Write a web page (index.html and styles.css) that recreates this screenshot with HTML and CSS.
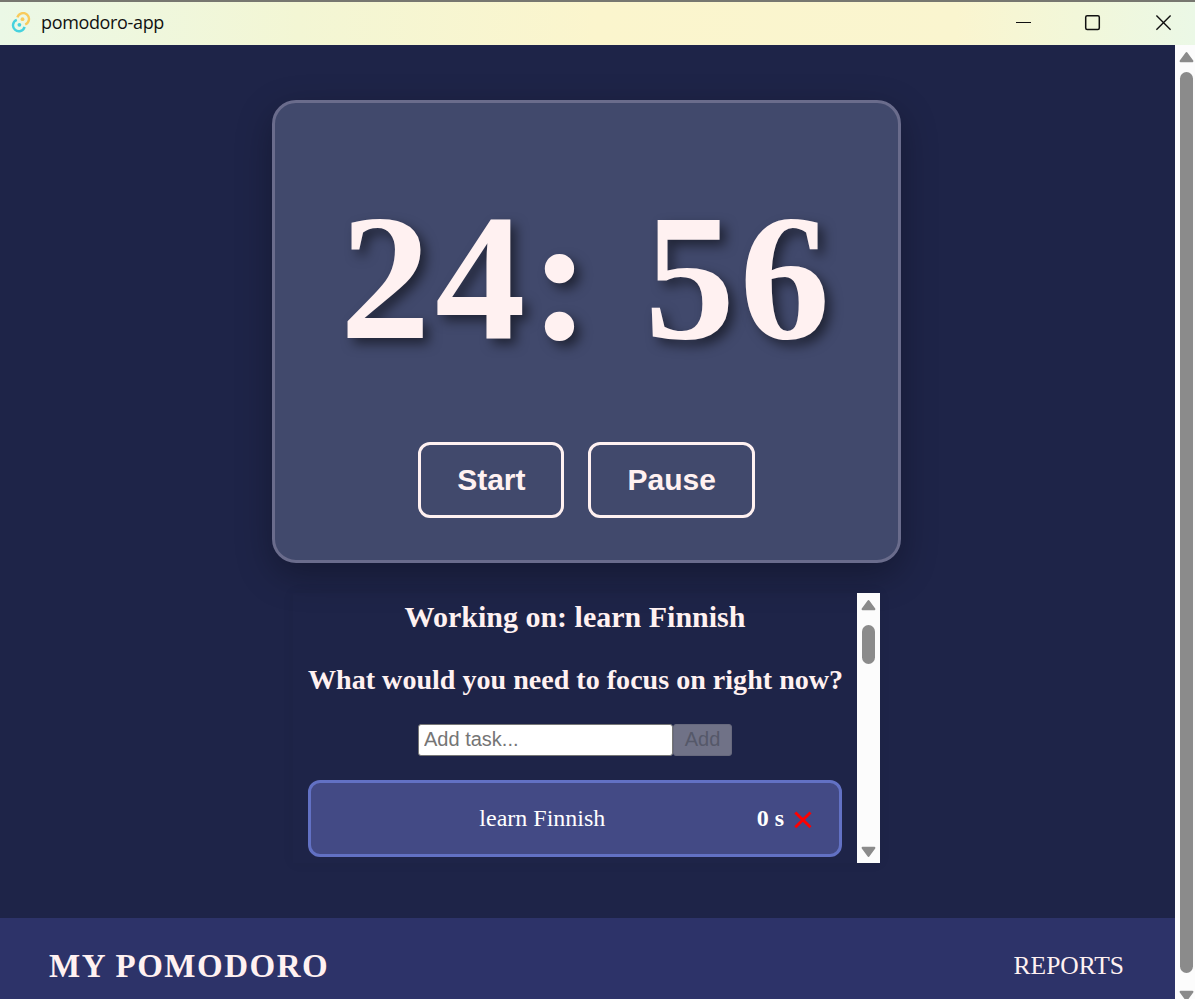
FILE: index.html
```html
<!DOCTYPE html>
<html lang="en">
<head>
<meta charset="utf-8">
<title>pomodoro-app</title>
<link rel="stylesheet" href="styles.css">
</head>
<body>
<header class="titlebar">
  <svg class="logo" width="20" height="21" viewBox="0 0 20 21" fill="none">
    <path d="M6.4 5.4A5.9 5.9 0 1 1 14.2 12.5" stroke="#f9cb5c" stroke-width="2.4"/>
    <path d="M13.6 14.9A5.9 5.9 0 1 1 5.8 7.8" stroke="#46d2de" stroke-width="2.4"/>
    <circle cx="11.5" cy="7.2" r="1.9" fill="#f9cb5c"/>
    <circle cx="8.4" cy="12.8" r="1.9" fill="#46d2de"/>
  </svg>
  <span class="window-title">pomodoro-app</span>
  <svg class="window-controls" width="156" height="16" viewBox="0 0 156 16" fill="none" stroke="#111">
    <path d="M0 7.5H15" stroke-width="1"/>
    <rect x="69.7" y="0.8" width="13.6" height="13.6" rx="1.5" stroke-width="1.5"/>
    <path d="M140.4 0.5L154.6 14.7M154.6 0.5L140.4 14.7" stroke-width="1.4"/>
  </svg>
</header>
<div class="viewport">
  <div class="page">
    <main class="main">
      <section class="timer">
        <div class="clock">24: 56</div>
        <div class="actions">
          <button class="btn">Start</button>
          <button class="btn">Pause</button>
        </div>
      </section>
      <section class="panel">
        <div class="tasks">
          <h2 class="current">Working on: learn Finnish</h2>
          <h3 class="question">What would you need to focus on right now?</h3>
          <form class="add-form">
            <input class="add-input" placeholder="Add task...">
            <button class="add-btn" disabled>Add</button>
          </form>
          <div class="task">
            <span class="task-name">learn Finnish</span>
            <b class="task-time">0 s</b>
            <svg class="remove" width="18" height="18" viewBox="0 0 18 18"><path d="M1.3 1.5L16.5 16.3M16.5 1.5L1.3 16.3" stroke="#f00" stroke-width="2.9"/></svg>
          </div>
        </div>
        <div class="scrollbar inner-bar">
          <svg class="arrow" width="15" height="12" viewBox="0 0 15 12"><path d="M7.5 2L13.4 10.2H1.6Z" fill="#8b8b8b" stroke="#8b8b8b" stroke-width="2" stroke-linejoin="round"/></svg>
          <div class="thumb inner-thumb"></div>
          <svg class="arrow down" width="15" height="12" viewBox="0 0 15 12"><path d="M7.5 10L13.4 1.8H1.6Z" fill="#8b8b8b" stroke="#8b8b8b" stroke-width="2" stroke-linejoin="round"/></svg>
        </div>
      </section>
    </main>
    <footer class="footer">
      <span class="brand">MY POMODORO</span>
      <span class="reports">REPORTS</span>
    </footer>
  </div>
  <div class="scrollbar outer-bar">
    <svg class="arrow" width="15" height="12" viewBox="0 0 15 12"><path d="M7.5 2L13.4 10.2H1.6Z" fill="#8b8b8b" stroke="#8b8b8b" stroke-width="2" stroke-linejoin="round"/></svg>
    <div class="thumb outer-thumb"></div>
    <svg class="arrow cut" width="15" height="12" viewBox="0 0 15 12"><path d="M7.5 10L13.4 1.8H1.6Z" fill="#8b8b8b" stroke="#8b8b8b" stroke-width="2" stroke-linejoin="round"/></svg>
  </div>
</div>
</body>
</html>
```
FILE: styles.css
```css
* { box-sizing: border-box; }
html, body { height: 100%; }
body {
  margin: 0;
  overflow: hidden;
  display: flex;
  flex-direction: column;
  background: #1e2448;
  color: #fff1f1;
  font-family: "Liberation Serif", serif;
  font-size: 24px;
}
.titlebar {
  flex: none;
  height: 45px;
  display: flex;
  align-items: center;
  padding: 0 23px 0 11px;
  border-top: 2px solid #777770;
  background: linear-gradient(90deg, #ebf8e6 0%, #f3f6d4 25%, #fbf5cd 50%, #faf5cf 80%, #f2f7d9 90%, #ebf8e6 100%);
  color: #111;
}
.logo { margin-top: -2px; }
.window-title {
  margin-left: 10px;
  font: 400 18px/24px "Open Sans", sans-serif;
  letter-spacing: -0.35px;
  margin-top: -3px;
}
.window-controls { margin-left: auto; margin-top: -1px; }
.viewport { flex: 1; min-height: 0; display: flex; }
.page { flex: 1; display: flex; flex-direction: column; }
.main {
  flex: 1;
  min-height: 0;
  display: flex;
  flex-direction: column;
  align-items: center;
  padding: 55px 2px 0 0;
}
.timer {
  width: 629px;
  height: 463px;
  padding-top: 71px;
  border: 3px solid #6a6c8c;
  border-radius: 24px;
  background: #41496c;
  box-shadow: 0 12px 36px rgba(0, 0, 0, 0.3);
}
.clock {
  margin-left: 65px;
  height: 207px;
  font-size: 181px;
  line-height: 207px;
  font-weight: bold;
  letter-spacing: 4.5px;
  white-space: pre;
  text-shadow: 6px 6px 12px rgba(0, 0, 0, 0.5);
}
.actions { display: flex; justify-content: center; gap: 24px; margin-top: 61px; }
.btn {
  height: 76px;
  padding: 0 36px;
  border: 3px solid #fff1f1;
  border-radius: 12px;
  background: none;
  color: #fff1f1;
  font: bold 30px "Liberation Sans", sans-serif;
}
.panel {
  width: 587px;
  height: 270px;
  margin-top: 30px;
  display: flex;
  box-shadow: 0 0 12px rgba(0, 0, 0, 0.06);
}
.tasks { width: 564px; padding: 6px 15px 0; text-align: center; }
.current { margin: 0; font-size: 30px; line-height: 35px; }
.question { margin: 29px 0 0; font-size: 28.08px; line-height: 33px; white-space: nowrap; }
.add-form { display: flex; justify-content: center; margin: 28px 0 24px; }
.add-input {
  width: 255px;
  height: 32px;
  padding: 0 5px 2px;
  border: 1px solid #767676;
  border-radius: 3px;
  background: #fff;
  font: 20px "Liberation Sans", sans-serif;
}
.add-input::placeholder { color: #757575; }
.add-btn {
  width: 59px;
  height: 32px;
  padding: 0 0 2px;
  border: 1px solid #67697d;
  border-radius: 3px;
  background: #707287;
  color: #555869;
  font: 20px "Liberation Sans", sans-serif;
}
.task {
  height: 77px;
  display: flex;
  align-items: center;
  padding: 0 27px 0 17px;
  border: 3px solid #6271c4;
  border-radius: 12px;
  background: #434a85;
  color: #fff;
}
.task-name { flex: 1; }
.task-time { margin-right: 10px; }
.remove { margin-top: 2px; }
.scrollbar { display: flex; flex-direction: column; align-items: center; background: #fcfcfc; }
.thumb { background: #8b8b8b; border-radius: 7px; }
.inner-bar { width: 23px; padding: 6px 0 5px; }
.inner-thumb { width: 13px; height: 39px; margin-top: 14px; }
.down { margin-top: auto; }
.outer-bar { width: 20px; padding: 6px 0 0 3px; }
.outer-thumb { flex: none; width: 13px; height: 901px; margin-top: 9px; }
.arrow { flex: none; }
.cut { margin-top: 17px; }
.footer {
  height: 81px;
  padding: 14px 51px 0 49px;
  display: flex;
  justify-content: space-between;
  align-items: flex-start;
  background: #2d3369;
}
.brand { font-size: 33px; line-height: 68px; font-weight: bold; letter-spacing: 1.5px; }
.reports { font-size: 25.5px; line-height: 68px; }
```
